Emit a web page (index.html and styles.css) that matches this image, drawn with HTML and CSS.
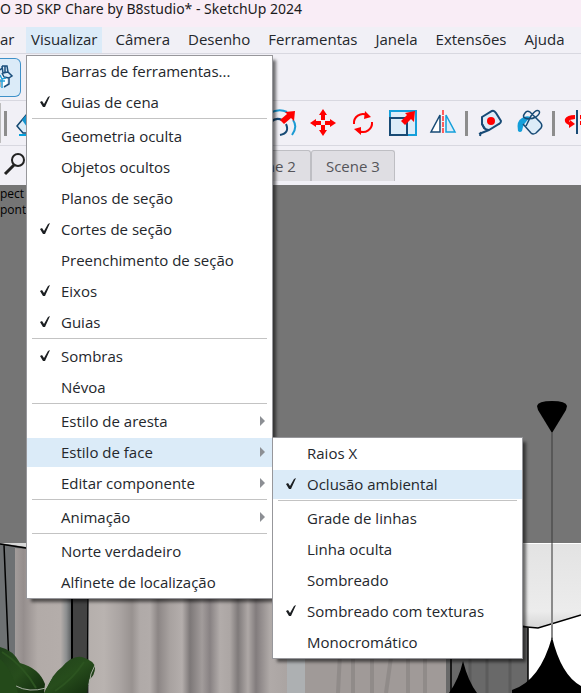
FILE: index.html
```html
<!DOCTYPE html>
<html lang="pt-BR">
<head>
  <meta charset="utf-8">
  <title>SketchUp 2024</title>
  <link rel="stylesheet" href="styles.css">
</head>
<body>
  <header class="titlebar">O 3D SKP Chare by B8studio* - SketchUp 2024</header>

  <nav class="menubar">
    <div class="menubar-item first"><button class="menubar-button">ar</button></div>
    <div class="menubar-item">
      <button class="menubar-button active">Visualizar</button>
      <ul class="menu">
        <li><button class="menu-item">Barras de ferramentas...</button></li>
        <li><button class="menu-item"><svg class="check" viewBox="0 0 12 14"><path d="M1 7L3 6L5 9L9 2L11 1L6 12L4 12Z"/></svg>Guias de cena</button></li>
        <li class="separator"></li>
        <li><button class="menu-item">Geometria oculta</button></li>
        <li><button class="menu-item">Objetos ocultos</button></li>
        <li><button class="menu-item">Planos de seção</button></li>
        <li><button class="menu-item"><svg class="check" viewBox="0 0 12 14"><path d="M1 7L3 6L5 9L9 2L11 1L6 12L4 12Z"/></svg>Cortes de seção</button></li>
        <li><button class="menu-item">Preenchimento de seção</button></li>
        <li><button class="menu-item"><svg class="check" viewBox="0 0 12 14"><path d="M1 7L3 6L5 9L9 2L11 1L6 12L4 12Z"/></svg>Eixos</button></li>
        <li><button class="menu-item"><svg class="check" viewBox="0 0 12 14"><path d="M1 7L3 6L5 9L9 2L11 1L6 12L4 12Z"/></svg>Guias</button></li>
        <li class="separator"></li>
        <li><button class="menu-item"><svg class="check" viewBox="0 0 12 14"><path d="M1 7L3 6L5 9L9 2L11 1L6 12L4 12Z"/></svg>Sombras</button></li>
        <li><button class="menu-item">Névoa</button></li>
        <li class="separator"></li>
        <li><button class="menu-item has-submenu">Estilo de aresta</button></li>
        <li class="open">
          <button class="menu-item has-submenu active">Estilo de face</button>
          <ul class="menu submenu">
            <li><button class="menu-item">Raios X</button></li>
            <li><button class="menu-item active"><svg class="check" viewBox="0 0 12 14"><path d="M1 7L3 6L5 9L9 2L11 1L6 12L4 12Z"/></svg>Oclusão ambiental</button></li>
            <li class="separator"></li>
            <li><button class="menu-item">Grade de linhas</button></li>
            <li><button class="menu-item">Linha oculta</button></li>
            <li><button class="menu-item">Sombreado</button></li>
            <li><button class="menu-item"><svg class="check" viewBox="0 0 12 14"><path d="M1 7L3 6L5 9L9 2L11 1L6 12L4 12Z"/></svg>Sombreado com texturas</button></li>
            <li><button class="menu-item">Monocromático</button></li>
          </ul>
        </li>
        <li><button class="menu-item has-submenu">Editar componente</button></li>
        <li class="separator"></li>
        <li><button class="menu-item has-submenu">Animação</button></li>
        <li class="separator"></li>
        <li><button class="menu-item">Norte verdadeiro</button></li>
        <li><button class="menu-item">Alfinete de localização</button></li>
      </ul>
    </div>
    <div class="menubar-item"><button class="menubar-button">Câmera</button></div>
    <div class="menubar-item"><button class="menubar-button">Desenho</button></div>
    <div class="menubar-item"><button class="menubar-button">Ferramentas</button></div>
    <div class="menubar-item"><button class="menubar-button">Janela</button></div>
    <div class="menubar-item"><button class="menubar-button">Extensões</button></div>
    <div class="menubar-item"><button class="menubar-button">Ajuda</button></div>
  </nav>

  <div class="toolbar views">
    <button class="view-button" aria-label="Iso">
      <svg width="20" height="38" viewBox="0 0 20 38">
        <path d="M0 18L3 15L7 20V28H0Z" fill="#fff"/>
        <path d="M0 20H1V28H0Z" fill="#b9b3b3"/>
        <path d="M0 11L2 9M2 7H7L8 13L3 14L2 7M5 7V13M8 13L12 17L9 19V25L4 28M4 18L9 19M2 14L4 18" fill="none" stroke="#1b4f7c" stroke-width="1.5"/>
        <path d="M0 16L2 20L6 19M2 20V29M0 22H5" fill="none" stroke="#25a0d8" stroke-width="1.5"/>
      </svg>
    </button>
  </div>

  <div class="toolbar tools">
    <span class="toolbar-edge"></span>
    <span class="divider"></span>
    <button class="tool" aria-label="Borracha">
      <svg width="32" height="32" viewBox="0 0 32 32">
        <path d="M4 19L14 7L28 16L18 26H10Z" fill="#dcecf8" stroke="#13466f" stroke-width="1.5"/>
        <path d="M9 13L14 7L21 14L14 20Z" fill="#1494cf"/>
        <path d="M6 28H24" stroke="#05a0dc" stroke-width="2"/>
      </svg>
    </button>
    <button class="tool push" aria-label="Equidistância">
      <svg width="32" height="32" viewBox="0 0 32 32">
        <path d="M3 6Q12 1 20 5M26 13Q31 20 25 28" fill="none" stroke="#1b9bd4" stroke-width="2"/>
        <path d="M4 15Q9 10 15 13M19 17Q23 26 13 28" fill="none" stroke="#174a75" stroke-width="2"/>
        <path d="M13 13L20 7L18 5L28 4L27 14L24 11L17 17Z" fill="#f00"/>
      </svg>
    </button>
    <button class="tool" aria-label="Mover">
      <svg width="32" height="32" viewBox="0 0 32 32">
        <path d="M16 2L20 8H18V13H14V8H12ZM16 29L12 23H14V18H18V23H20ZM3 16L9 12V14H14V18H9V20ZM29 16L23 12V14H18V18H23V20Z" fill="#f00"/>
      </svg>
    </button>
    <button class="tool" aria-label="Rotacionar">
      <svg width="32" height="32" viewBox="0 0 32 32">
        <path d="M7 17A9 9 0 0 1 20 8M25 15A9 9 0 0 1 12 24" fill="none" stroke="#f00" stroke-width="2"/>
        <path d="M18 4L24 10L17 12ZM14 20L7 22L14 28Z" fill="#f00"/>
      </svg>
    </button>
    <button class="tool" aria-label="Escala">
      <svg width="32" height="32" viewBox="0 0 32 32">
        <rect x="3" y="4" width="26" height="24" fill="#dcecf8" stroke="#149fda" stroke-width="2"/>
        <path d="M3 11H20V28H3Z" fill="none" stroke="#174a75" stroke-width="2"/>
        <path d="M14 14L20 8L18 6L28 4L27 15L24 12L18 18Z" fill="#f00"/>
      </svg>
    </button>
    <button class="tool" aria-label="Inverter">
      <svg width="32" height="32" viewBox="0 0 32 32">
        <path d="M13 8V25H4Z" fill="#fff" stroke="#174a75" stroke-width="1.5"/>
        <path d="M19 8V25H28Z" fill="#dcecf8" stroke="#149fda" stroke-width="1.5"/>
        <path d="M16 3V27" stroke="#ff5b5b" stroke-width="2" stroke-dasharray="5 1"/>
      </svg>
    </button>
    <span class="divider"></span>
    <button class="tool" aria-label="Fita métrica">
      <svg width="32" height="32" viewBox="0 0 32 32">
        <path d="M8 10L18 4Q20 3 22 6L27 14Q27 16 25 17L15 23Q12 23 10 21L8 17Z" fill="#dcecf8" stroke="#174a75" stroke-width="2"/>
        <path d="M8 10V17L11 22M15 23L5 27M7 25L6 29" fill="none" stroke="#174a75" stroke-width="2"/>
        <circle cx="17" cy="14" r="4" fill="#f00"/>
      </svg>
    </button>
    <button class="tool" aria-label="Pintura">
      <svg width="32" height="32" viewBox="0 0 32 32">
        <path d="M10 16L22 8L29 18Q27 25 20 27L15 24Z" fill="#dcecf8"/>
        <path d="M4 24Q2 14 8 11Q12 8 17 10Q9 16 8 24Q6 26 4 24Z" fill="#149fda"/>
        <path d="M9 17L17 26Q19 28 22 26L27 21Q29 18 26 15L16 5Q13 3 11 6Q8 10 11 11Q16 13 22 10Q27 6 25 4Q22 2 17 9L12 19" fill="none" stroke="#174a75" stroke-width="1.5"/>
      </svg>
    </button>
    <span class="divider"></span>
    <button class="tool" aria-label="Orbitar">
      <svg width="32" height="32" viewBox="0 0 32 32">
        <path d="M14 8Q6 8 4 12Q3 16 8 18V21L14 17L9 13V15Q6 13 14 12ZM19 8Q28 8 29 12Q28 18 19 18V14Q25 13 19 12Z" fill="#f00"/>
        <path d="M16 3V27" stroke="#174a75" stroke-width="2"/>
      </svg>
    </button>
  </div>

  <div class="scenes">
    <button class="search" aria-label="Pesquisar cenas">
      <svg width="24" height="24" viewBox="0 0 24 24">
        <circle cx="15" cy="8" r="6" fill="none" stroke="#222" stroke-width="2"/>
        <path d="M11 13L2 22" stroke="#222" stroke-width="3"/>
      </svg>
    </button>
    <button class="scene-tab push">Scene 2</button>
    <button class="scene-tab">Scene 3</button>
  </div>

  <main class="viewport">
    <svg class="model" viewBox="0 0 581 508" preserveAspectRatio="xMinYMin slice">
      <defs>
        <linearGradient id="folds" x1="88" x2="288" y1="0" y2="0" gradientUnits="userSpaceOnUse">
          <stop offset="0" stop-color="#b5afac"/>
          <stop offset=".08" stop-color="#b9b3b0"/>
          <stop offset=".16" stop-color="#aaa4a2"/>
          <stop offset=".22" stop-color="#989290"/>
          <stop offset=".26" stop-color="#b0aaa8"/>
          <stop offset=".31" stop-color="#b2acaa"/>
          <stop offset=".35" stop-color="#8c8685"/>
          <stop offset=".41" stop-color="#a8a2a0"/>
          <stop offset=".47" stop-color="#b4aeac"/>
          <stop offset=".51" stop-color="#7d7878"/>
          <stop offset=".57" stop-color="#a29c9b"/>
          <stop offset=".61" stop-color="#888283"/>
          <stop offset=".66" stop-color="#b2acaa"/>
          <stop offset=".71" stop-color="#aca6a4"/>
          <stop offset=".75" stop-color="#7f7a7a"/>
          <stop offset=".8" stop-color="#aea8a6"/>
          <stop offset=".84" stop-color="#827c7d"/>
          <stop offset=".91" stop-color="#b0aaa8"/>
          <stop offset="1" stop-color="#aaa4a2"/>
        </linearGradient>
        <linearGradient id="sideCurtain" x1="15" x2="72" y1="0" y2="0" gradientUnits="userSpaceOnUse">
          <stop offset="0" stop-color="#a39d9b"/>
          <stop offset=".15" stop-color="#958e8d"/>
          <stop offset=".4" stop-color="#b2aba8"/>
          <stop offset=".8" stop-color="#b4adaa"/>
          <stop offset=".9" stop-color="#8d8f90"/>
          <stop offset="1" stop-color="#55585a"/>
        </linearGradient>
        <linearGradient id="ceiling" x1="0" x2="0" y1="0" y2="1">
          <stop offset="0" stop-color="#e3e3e3"/>
          <stop offset=".8" stop-color="#ececec"/>
          <stop offset="1" stop-color="#d5d5d5"/>
        </linearGradient>
        <linearGradient id="leaf" x1="0" x2="1" y1="0" y2="1">
          <stop offset="0" stop-color="#20401a"/>
          <stop offset=".5" stop-color="#274d1c"/>
          <stop offset="1" stop-color="#122b0e"/>
        </linearGradient>
      </defs>
      <rect width="581" height="508" fill="#757575"/>

      <!-- left window frame and curtains -->
      <path d="M0 358L26 363V508H0Z" fill="#6e7173"/>
      <path d="M0 358H26V362Z" fill="#d8d8d8"/>
      <path d="M15 363L26 364V400H72V508H15Z" fill="url(#sideCurtain)"/>
      <path d="M0 359L26 363M4 360L9 480" fill="none" stroke="#000" stroke-width="1.5"/>
      <rect x="71" y="400" width="17" height="108" fill="#434343"/>
      <path d="M72 400V508" fill="none" stroke="#000" stroke-width="2"/>
      <path d="M88 400L87 508" fill="none" stroke="#000" stroke-width="1"/>
      <rect x="89" y="400" width="198" height="108" fill="url(#folds)"/>
      <rect x="287" y="465" width="18" height="43" fill="#adb0b2"/>
      <path d="M305 465H446V508H305Z" fill="#a09a98"/>
      <path d="M340 468L338 508M353 470V508M372 470V508M391 472L386 508M408 468V508M425 468V508" stroke="#827d7c" stroke-width="4" opacity=".5"/>

      <!-- ceiling, column and wall on the right -->
      <rect x="515" y="358" width="66" height="150" fill="#fff"/>
      <path d="M515 359H581V430L538 443L515 441Z" fill="url(#ceiling)"/>
      <path d="M446 440H523L528 442V508H446Z" fill="#696969"/>
      <path d="M451 460V508M528 442V508M515 441L538 443L581 430" fill="none" stroke="#000" stroke-width="1.5"/>
      <path d="M470 473V508M487 473V508M510 473V508" stroke="#5c5c5c" stroke-width="3"/>

      <!-- pendant lamps -->
      <path d="M552 248V359" stroke="#3c3c3c" stroke-width="1"/>
      <path d="M552 359V454" stroke="#8a8a8a" stroke-width="2"/>
      <path d="M537 221Q538 216 552 216Q566 216 567 221L566 225L552 248L538 225Z" fill="#000"/>
      <path d="M552 452Q561 490 581 501V508H512V505Q540 496 552 452Z" fill="#000"/>
      <path d="M463 476Q468 496 477 508H449Q459 494 463 476Z" fill="#000"/>

      <!-- plant -->
      <path d="M0 462Q13 465 20 478Q39 483 45 499L44 508H0Z" fill="url(#leaf)"/>
      <path d="M44 508Q52 489 62 482Q72 470 82 472Q95 476 95 483Q95 490 89 495L87 508Z" fill="url(#leaf)"/>
      <path d="M16 501Q29 508 46 503L52 492M95 480Q90 488 89 500" fill="none" stroke="#a9b0a4" stroke-width="1"/>
      <path d="M55 506Q73 494 84 477M2 467Q23 480 36 503" fill="none" stroke="#2c5420" stroke-width="2"/>
      <path d="M0 474Q12 484 18 508H0Z" fill="#244a1a"/>
    </svg>
    <div class="camera-note"><span>pect</span><span>pont</span></div>
  </main>
</body>
</html>
```
FILE: styles.css
```css
* {
  box-sizing: border-box;
}

body {
  margin: 0;
  min-height: 100vh;
  display: flex;
  flex-direction: column;
  overflow: hidden;
  background: #f1f0f6;
  color: #24272c;
  font-family: "Open Sans", "Noto Sans", sans-serif;
  font-size: 15px;
}

button {
  margin: 0;
  padding: 0;
  border: none;
  background: none;
  color: inherit;
  font: inherit;
}

svg {
  display: block;
}

.titlebar {
  height: 27px;
  background: #f9edf6;
  color: #1b1b1b;
  font-family: "Noto Sans", sans-serif;
  font-size: 14px;
  line-height: 18px;
  white-space: nowrap;
}

.menubar {
  display: flex;
  gap: 8px;
  height: 27px;
  border-bottom: 1px solid #d8d8e0;
}

.menubar-item {
  position: relative;
}

.menubar-button {
  height: 26px;
  padding: 0 5px 2px;
}

.first .menubar-button {
  padding-left: 0;
}

.first {
  width: 18px;
}

.active {
  background: #dbebf8;
}

.menu {
  position: absolute;
  z-index: 2;
  top: 28px;
  left: 0;
  width: 247px;
  margin: 0;
  padding: 0;
  border: 1px solid #97979b;
  background: #fff;
  box-shadow: 4px 4px 3px -1px rgba(0, 0, 0, 0.55);
  list-style: none;
}

.submenu {
  top: 0;
  left: 100%;
  width: 251px;
}

.open {
  position: relative;
}

.menu-item {
  display: flex;
  align-items: center;
  position: relative;
  width: 100%;
  height: 29px;
  margin: 1px 0;
  padding: 0 0 2px 34px;
  text-align: left;
  white-space: nowrap;
}

.menu li {
  display: flow-root;
}

.separator {
  height: 3px;
  margin: 0 5px;
  border-top: 1px solid #c3c3c3;
}

.check {
  position: absolute;
  left: 12px;
  width: 12px;
  height: 14px;
  fill: #1c1f22;
  stroke: #1c1f22;
  stroke-width: 0;
}

.has-submenu::after {
  content: "";
  margin-left: auto;
  margin-right: 7px;
  border: 5px solid transparent;
  border-left: 5px solid #8c8f94;
  border-right: none;
}

.toolbar {
  display: flex;
  align-items: center;
  border-bottom: 1px solid #d8d8e0;
}

.views {
  height: 47px;
}

.view-button {
  width: 21px;
  height: 39px;
  border: 1px solid #3e91c9;
  border-left: none;
  border-radius: 0 6px 6px 0;
  background: #dbebf8;
}

.tools {
  height: 45px;
  overflow: hidden;
}

.toolbar-edge {
  width: 3px;
  height: 40px;
  margin-right: 1px;
  border: 1px solid #bbb;
  border-left: none;
  border-radius: 0 4px 4px 0;
}

.divider {
  flex: none;
  width: 3px;
  height: 25px;
  margin: 0 2px;
  background: #8d8d8d;
}

.tool {
  flex: none;
  width: 40px;
  padding: 0 4px;
}

.tool.push {
  margin-left: 214px;
}

.scenes {
  display: flex;
  align-items: flex-end;
  height: 39px;
  padding-bottom: 4px;
}

.search {
  align-self: center;
  width: 27px;
  padding-left: 3px;
}

.scene-tab {
  height: 31px;
  padding: 0 14px;
  border: 1px solid #bebec3;
  border-bottom: none;
  border-radius: 3px 3px 0 0;
  background: #dfdee3;
  color: #55555a;
}

.scene-tab.push {
  margin-left: 200px;
}

.viewport {
  position: relative;
  flex: 1;
  overflow: hidden;
}

.model {
  width: 100%;
  min-height: 100%;
}

.camera-note {
  position: absolute;
  top: 1px;
  left: 0;
  display: flex;
  flex-direction: column;
  color: #000;
  font-family: "Open Sans", sans-serif;
  font-size: 12px;
  line-height: 16px;
}
```
